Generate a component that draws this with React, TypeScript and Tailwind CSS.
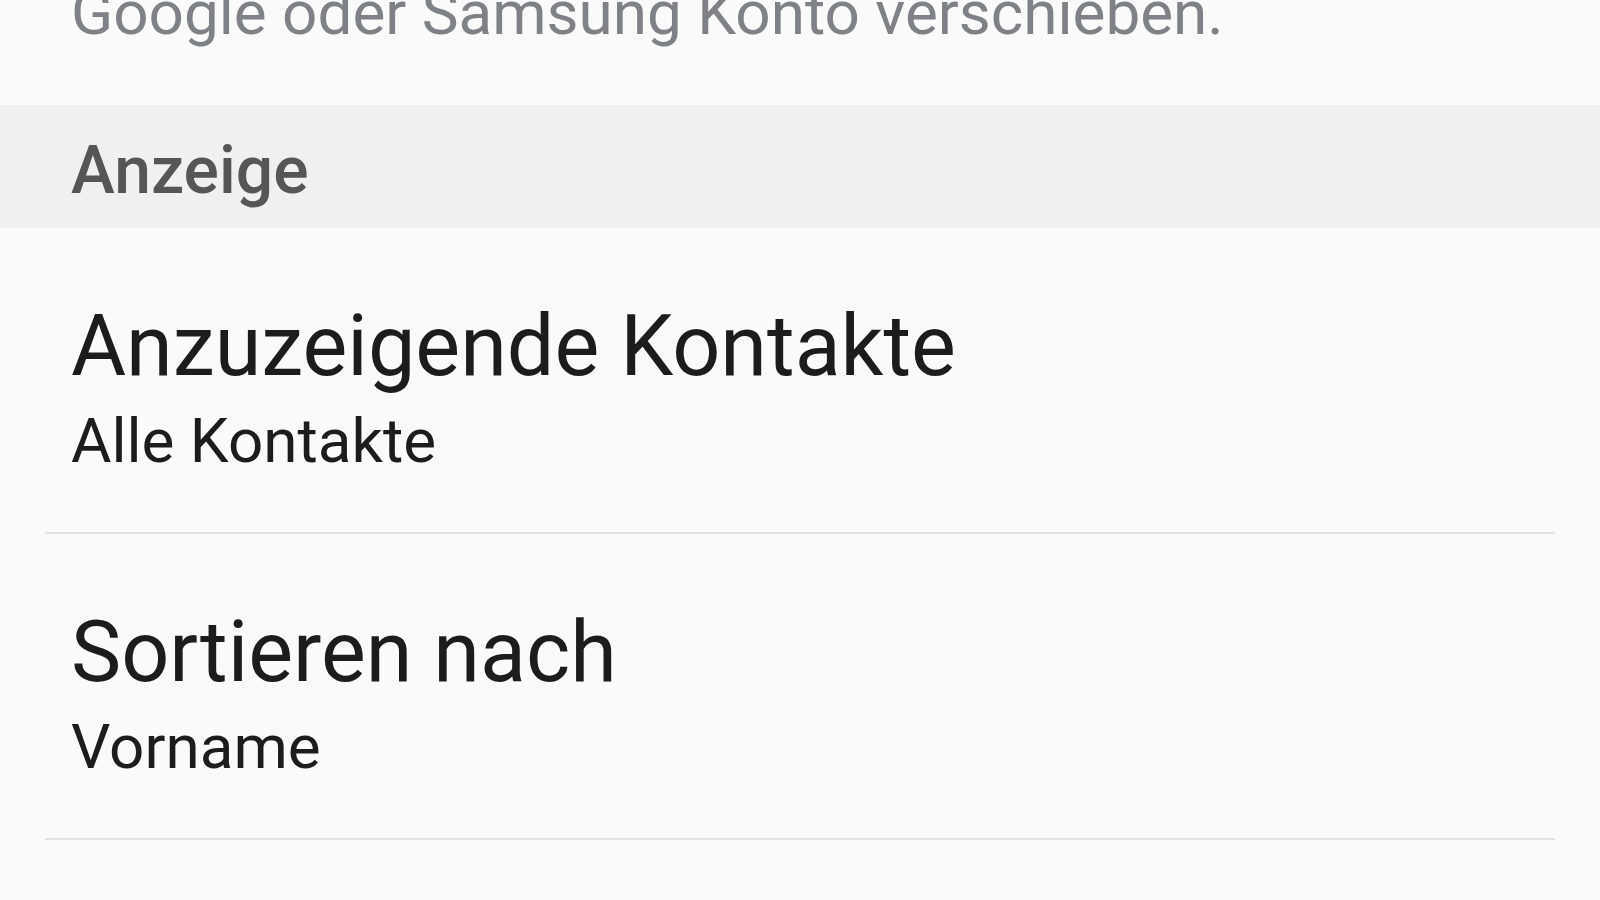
const font = { fontFamily: 'Roboto, "Noto Sans", sans-serif' }

function SettingRow({ title, value }: { title: string; value: string }) {
  return (
    <div className="mx-[45px] h-[306px] border-b-2 border-[#e2e2e2] pl-[26px] pt-[68px]">
      <div className="text-[84.5px] leading-[101px] text-[#1c1c1c]">{title}</div>
      <div className="mt-[4px] text-[62px] leading-[80px] text-[#1c1c1c]">{value}</div>
    </div>
  )
}

export default function App() {
  return (
    <div className="h-[900px] w-[1600px] overflow-hidden bg-[#fafafa]" style={font}>
      {/* Tail of the previous section's description, scrolled partly off the top */}
      <div className="flex h-[105px] items-end pb-[52px] pl-[71px]">
        <div className="whitespace-nowrap text-[62px] leading-[80px] text-[#7e8185]">
          Google oder Samsung Konto verschieben.
        </div>
      </div>

      {/* Section header */}
      <div className="h-[123px] bg-[#f0f0f0] pl-[71px] pt-[26px]">
        <div className="text-[66px] font-medium leading-[80px] text-[#555658]">Anzeige</div>
      </div>

      <SettingRow title="Anzuzeigende Kontakte" value="Alle Kontakte" />
      <SettingRow title="Sortieren nach" value="Vorname" />
    </div>
  )
}
